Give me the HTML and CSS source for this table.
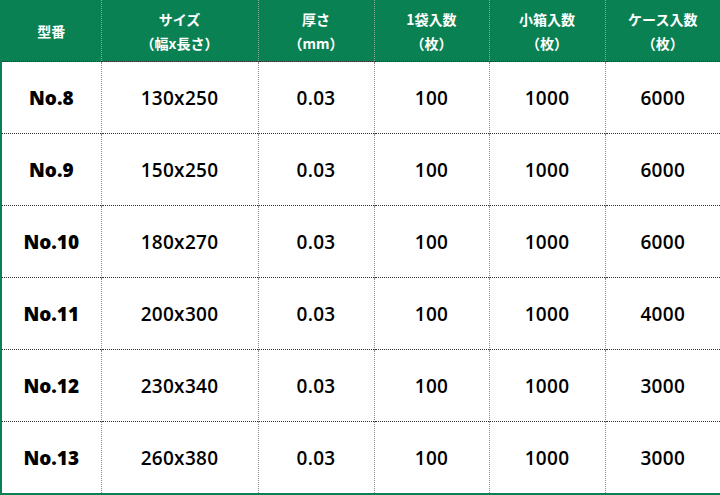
FILE: index.html
```html
<!DOCTYPE html>
<html lang="ja">
<head>
<meta charset="utf-8">
<link rel="stylesheet" href="styles.css">
</head>
<body>
<table class="spec">
  <colgroup>
    <col class="c1"><col class="c2"><col class="c3"><col class="c4"><col class="c5"><col class="c6">
  </colgroup>
  <thead>
    <tr>
      <th>型番</th>
      <th>サイズ<br>（幅x長さ）</th>
      <th>厚さ<br>（mm）</th>
      <th>1袋入数<br>（枚）</th>
      <th>小箱入数<br>（枚）</th>
      <th>ケース入数<br>（枚）</th>
    </tr>
  </thead>
  <tbody>
    <tr><td class="model">No.8</td><td>130x250</td><td>0.03</td><td>100</td><td>1000</td><td>6000</td></tr>
    <tr><td class="model">No.9</td><td>150x250</td><td>0.03</td><td>100</td><td>1000</td><td>6000</td></tr>
    <tr><td class="model">No.10</td><td>180x270</td><td>0.03</td><td>100</td><td>1000</td><td>6000</td></tr>
    <tr><td class="model">No.11</td><td>200x300</td><td>0.03</td><td>100</td><td>1000</td><td>4000</td></tr>
    <tr><td class="model">No.12</td><td>230x340</td><td>0.03</td><td>100</td><td>1000</td><td>3000</td></tr>
    <tr><td class="model">No.13</td><td>260x380</td><td>0.03</td><td>100</td><td>1000</td><td>3000</td></tr>
  </tbody>
</table>
</body>
</html>
```

FILE: styles.css
```css
html, body {
  margin: 0;
  padding: 0;
  background: #fff;
}
body {
  font-family: "Open Sans", "Noto Sans CJK JP", sans-serif;
  color: #000;
}
.spec {
  width: 720px;
  table-layout: fixed;
  border-collapse: collapse;
  border-left: 2px solid #0a8153;
  border-right: 2px solid #0a8153;
  border-bottom: 2px solid #0a8153;
}
.c1 { width: 100px; }
.c2 { width: 157px; }
.c3 { width: 116px; }
.c4 { width: 115px; }
.c5 { width: 116px; }
.c6 { width: 116px; }
.spec th {
  background: #0a8153;
  color: #fff;
  font-family: "Noto Sans CJK JP", sans-serif;
  font-size: 14px;
  font-weight: 700;
  line-height: 24px;
  height: 61px;
  padding: 0;
  text-align: center;
  vertical-align: middle;
  border-left: 1px dotted #8fa89c;
  border-bottom: 1px dotted #333;
}
.spec th:first-child { border-left: none; }
.spec td {
  height: 71px;
  padding: 0;
  text-align: center;
  vertical-align: middle;
  font-size: 19px;
  font-weight: 600;
  letter-spacing: 0.3px;
  border-left: 1px dotted #888;
  border-top: 1px dotted #333;
}
.spec td:first-child { border-left: none; }
.spec td.model {
  font-weight: 800;
  letter-spacing: 0;
}
```
